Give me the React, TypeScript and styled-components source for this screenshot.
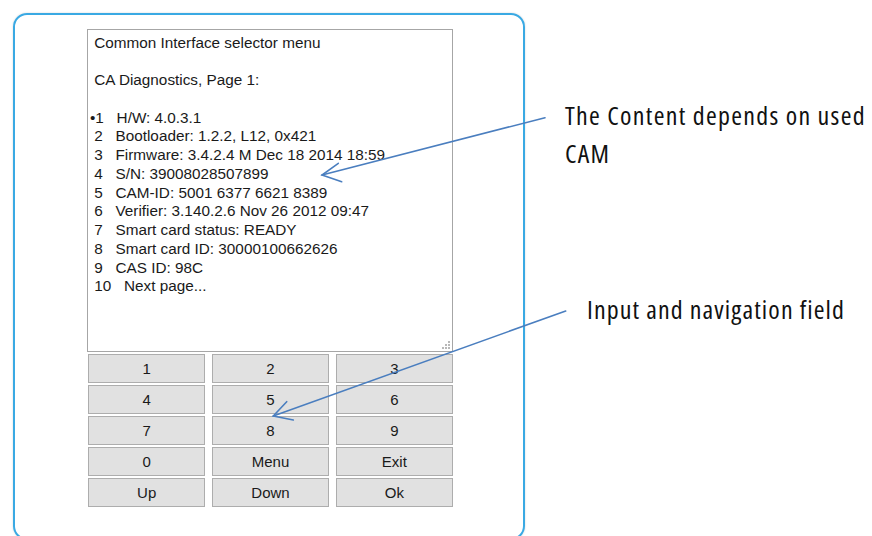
import React from 'react';
import styled, { createGlobalStyle } from 'styled-components';

const GlobalStyle = createGlobalStyle`
  html, body {
    margin: 0;
    padding: 0;
    background: #ffffff;
  }
  body {
    width: 872px;
    height: 536px;
    overflow: hidden;
  }
`;

const Page = styled.div`
  position: relative;
  display: flex;
  align-items: flex-start;
  width: 872px;
  height: 536px;
  padding: 13px 0 0 13px;
  box-sizing: border-box;
  font-family: 'Liberation Sans', Arial, sans-serif;
`;

const Panel = styled.div`
  flex: none;
  width: 512px;
  height: 527px;
  box-sizing: border-box;
  border: 2px solid #3aa9e3;
  border-radius: 14px;
  box-shadow: 0 0 2px rgba(0, 0, 0, 0.18);
  padding: 14px 0 0 72px;
`;

const Screen = styled.div`
  position: relative;
  width: 366px;
  height: 323px;
  box-sizing: border-box;
  border: 1px solid #a6a6a6;
  padding: 3.5px 2px;
  font-size: 15.3px;
  line-height: 18.75px;
  color: #1a1a1a;
  white-space: pre;
  overflow: hidden;
`;

const Line = styled.div`
  height: 18.75px;
`;

const Grip = styled.svg`
  position: absolute;
  right: 2px;
  bottom: 2px;
`;

const Keypad = styled.div`
  display: grid;
  grid-template-columns: repeat(3, 1fr);
  column-gap: 6.5px;
  row-gap: 2px;
  width: 365px;
  margin: 2px 0 0 1px;
`;

const Key = styled.button`
  height: 29px;
  padding: 0;
  margin: 0;
  background: #e1e1e1;
  border: 1px solid #adadad;
  border-radius: 0;
  font-family: 'Liberation Sans', Arial, sans-serif;
  font-size: 15px;
  color: #1a1a1a;
  text-align: center;
  cursor: pointer;
`;

const Notes = styled.div`
  display: flex;
  flex-direction: column;
`;

const Note = styled.div<{ $indent: number; $top: number; $spacing: number }>`
  margin-left: ${p => p.$indent}px;
  margin-top: ${p => p.$top}px;
  font-family: 'Open Sans', 'Noto Sans', sans-serif;
  font-stretch: 75%;
  font-size: 26px;
  letter-spacing: ${p => p.$spacing}px;
  line-height: 38px;
  color: #111111;
  white-space: nowrap;
`;

const Arrows = styled.svg`
  position: absolute;
  left: 0;
  top: 0;
  pointer-events: none;
`;

const lines = [
  ' Common Interface selector menu',
  '',
  ' CA Diagnostics, Page 1:',
  '',
  '•1   H/W: 4.0.3.1',
  ' 2   Bootloader: 1.2.2, L12, 0x421',
  ' 3   Firmware: 3.4.2.4 M Dec 18 2014 18:59',
  ' 4   S/N: 39008028507899',
  ' 5   CAM-ID: 5001 6377 6621 8389',
  ' 6   Verifier: 3.140.2.6 Nov 26 2012 09:47',
  ' 7   Smart card status: READY',
  ' 8   Smart card ID: 30000100662626',
  ' 9   CAS ID: 98C',
  ' 10   Next page...',
];

const keys = ['1', '2', '3', '4', '5', '6', '7', '8', '9', '0', 'Menu', 'Exit', 'Up', 'Down', 'Ok'];

const gripDots = [
  [7, 1],
  [4, 4],
  [7, 4],
  [1, 7],
  [4, 7],
  [7, 7],
];

export default function App() {
  return (
    <>
      <GlobalStyle />
      <Page>
        <Panel>
          <Screen>
            {lines.map((l, i) => (
              <Line key={i}>{l}</Line>
            ))}
            <Grip width="9" height="9" viewBox="0 0 9 9">
              {gripDots.map(([x, y], i) => (
                <rect key={i} x={x} y={y} width="2" height="2" fill="#b8b8b8" />
              ))}
            </Grip>
          </Screen>
          <Keypad>
            {keys.map(k => (
              <Key key={k}>{k}</Key>
            ))}
          </Keypad>
        </Panel>
        <Notes>
          <Note $indent={40} $top={83} $spacing={1.3}>
            The Content depends on used
            <br />
            CAM
          </Note>
          <Note $indent={62} $top={118} $spacing={1.1}>
            Input and navigation field
          </Note>
        </Notes>
        <Arrows width="872" height="536" viewBox="0 0 872 536">
          <g stroke="#4a7ebf" strokeWidth="1.6" fill="none" strokeLinecap="round">
            <line x1="545" y1="117.7" x2="322" y2="175" />
            <polyline points="338.3,163.3 322,175 341.7,181.7" />
            <line x1="565.7" y1="311" x2="273.3" y2="416" />
            <polyline points="286.7,401.7 273.3,416 293.3,420" />
          </g>
        </Arrows>
      </Page>
    </>
  );
}
